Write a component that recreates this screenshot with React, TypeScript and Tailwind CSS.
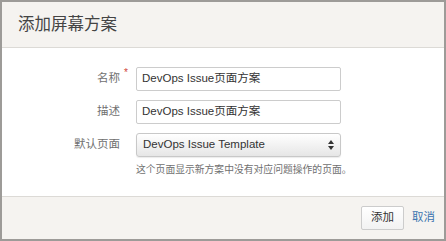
const font = "'Liberation Sans', 'Noto Sans CJK SC', sans-serif";

const fields = [
  { label: '名称', value: 'DevOps Issue页面方案', required: true },
  { label: '描述', value: 'DevOps Issue页面方案', required: false },
];

export default function App() {
  return (
    <div
      className="w-[446px] h-[241px] flex flex-col border-2 border-[#9d9b98] bg-white overflow-hidden"
      style={{ fontFamily: font }}
    >
      {/* Header */}
      <div className="h-[46px] shrink-0 flex items-center px-[16px] bg-[#f5f3f0] border-b border-[#dcdad6]">
        <h2 className="text-[16.5px] text-[#444]">添加屏幕方案</h2>
      </div>

      {/* Body */}
      <div className="flex-1 flex flex-col gap-[9px] pt-[19px]">
        {fields.map((f) => (
          <div key={f.label} className="flex items-center">
            <div className="w-[124px] text-right text-[11.5px] text-[#707070] pr-[6px] relative">
              {f.label}
              {f.required && (
                <span className="absolute right-[-2px] top-[-5px] text-[#d04437] text-[10px]">*</span>
              )}
            </div>
            <div className="ml-[10px] w-[205px] h-[24px] border border-[#cccccc] rounded-[2px] flex items-center pl-[5px] text-[11.5px] text-[#333]">
              {f.value}
            </div>
          </div>
        ))}
        <div className="flex items-center">
          <div className="w-[124px] text-right text-[11.5px] text-[#707070] pr-[6px]">默认页面</div>
          <div className="ml-[10px] w-[205px] h-[24px] border border-[#c8c8c8] rounded-[3px] flex items-center justify-between pl-[6px] pr-[6px] text-[11.5px] text-[#333] bg-gradient-to-b from-[#ffffff] to-[#e6e6e6] shadow-[0_1px_1px_rgba(0,0,0,0.08)]">
            <span>DevOps Issue Template</span>
            <svg width="6" height="10" viewBox="0 0 6 10" className="text-[#333]">
              <path d="M3 0 L6 4 L0 4 Z" fill="currentColor" />
              <path d="M3 10 L6 6 L0 6 Z" fill="currentColor" />
            </svg>
          </div>
        </div>
        <p className="ml-[134px] -mt-[3px] text-[9.8px] text-[#707070]">
          这个页面显示新方案中没有对应问题操作的页面。
        </p>
      </div>

      {/* Footer */}
      <div className="h-[43px] shrink-0 flex items-center justify-end gap-[8px] pr-[9px] bg-[#f5f3f0] border-t border-[#dcdad6]">
        <button className="h-[24px] px-[9px] border border-[#cccccc] rounded-[2px] bg-gradient-to-b from-[#ffffff] to-[#f2f2f2] text-[11.5px] text-[#333]">
          添加
        </button>
        <span className="text-[11.5px] text-[#3b73af]">取消</span>
      </div>
    </div>
  );
}
